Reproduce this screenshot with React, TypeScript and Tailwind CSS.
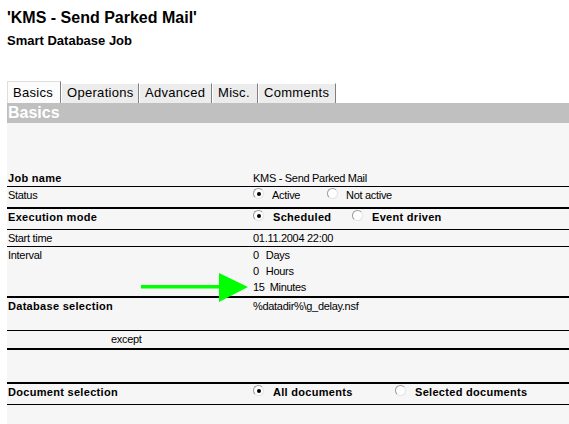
import React from 'react'

const FONT = { fontFamily: '"Liberation Sans", Arial, sans-serif' }

function Radio({ checked }: { checked?: boolean }) {
  return (
    <span className="mt-[1px] inline-flex h-[11px] w-[11px] shrink-0 items-center justify-center rounded-full border border-t-[#9a9a9a] border-l-[#9a9a9a] border-r-[#e4e4e4] border-b-[#e4e4e4] bg-white">
      {checked && <span className="h-[4px] w-[4px] rounded-full bg-black" />}
    </span>
  )
}

function Option({ checked, label, bold, width }: { checked?: boolean; label: string; bold?: boolean; width?: string }) {
  return (
    <div className={`flex items-start ${width ?? ''}`}>
      <Radio checked={checked} />
      <span className={bold ? 'ml-[9px] font-bold tracking-[0.3px]' : 'ml-[8px]'}>{label}</span>
    </div>
  )
}

const TABS = [
  { label: 'Basics', w: 'w-[54px]' },
  { label: 'Operations', w: 'w-[78px]' },
  { label: 'Advanced', w: 'w-[73px]' },
  { label: 'Misc.', w: 'w-[46px]' },
  { label: 'Comments', w: 'w-[78px]' },
]

export default function App() {
  return (
    <div className="relative h-[424px] w-[569px] overflow-hidden bg-white text-black" style={FONT}>
      {/* Title */}
      <div className="pl-[7px] pt-[10px] text-[16px] font-bold leading-[16px]">'KMS - Send Parked Mail'</div>
      <div className="mt-[8px] pl-[7px] text-[13px] font-bold leading-[13px]">Smart Database Job</div>

      {/* Tabs */}
      <div className="mt-[34px] flex h-[22px] items-end pl-[7px] text-[13px] leading-[13px] tracking-[0.3px]">
        {TABS.map((t, i) =>
          i === 0 ? (
            <div key={t.label} className={`${t.w} h-[22px] border-l border-t border-r border-l-[#dedede] border-t-[#dedede] border-r-[#808080] bg-[#fcfcfc] pl-[5px] pt-[4px]`}>
              {t.label}
            </div>
          ) : (
            <div key={t.label} className={`${t.w} h-[20px] border-l border-t border-r border-l-white border-t-white border-r-[#808080] bg-[#ececec] pl-[5px] pt-[2px]`}>
              {t.label}
            </div>
          )
        )}
      </div>

      {/* Content */}
      <div className="ml-[7px] w-[562px] bg-[#f6f6f6] text-[11px] leading-[16px] tracking-[-0.3px]">
        <div className="h-[20px] bg-[#c0c0c0] pl-[1px] text-[16px] font-bold leading-[20px] tracking-normal text-white">Basics</div>
        <div className="h-[47px]" />

        <div className="grid h-[17px] grid-cols-[246px_1fr] border-b border-black">
          <div className="pl-[1px] font-bold tracking-[0.3px]">Job name</div>
          <div>KMS - Send Parked Mail</div>
        </div>
        <div className="grid h-[22px] grid-cols-[246px_1fr] border-b-2 border-black">
          <div className="pl-[1px]">Status</div>
          <div className="flex">
            <Option checked label="Active" width="w-[74px]" />
            <Option label="Not active" />
          </div>
        </div>
        <div className="grid h-[21px] grid-cols-[246px_1fr] border-b border-black">
          <div className="pl-[1px] font-bold tracking-[0.3px]">Execution mode</div>
          <div className="flex">
            <Option checked bold label="Scheduled" width="w-[99px]" />
            <Option bold label="Event driven" />
          </div>
        </div>
        <div className="grid h-[17px] grid-cols-[246px_1fr] border-b border-black">
          <div className="pl-[1px]">Start time</div>
          <div>01.11.2004 22:00</div>
        </div>
        <div className="grid h-[51px] grid-cols-[246px_1fr] border-b-2 border-black">
          <div className="pl-[1px]">Interval</div>
          <div>
            <div>0<span className="ml-[7px]">Days</span></div>
            <div>0<span className="ml-[7px]">Hours</span></div>
            <div>15<span className="ml-[5px]">Minutes</span></div>
          </div>
        </div>
        <div className="grid h-[33px] grid-cols-[246px_1fr] border-b border-black">
          <div className="pl-[1px] font-bold tracking-[0.3px]">Database selection</div>
          <div>%datadir%\g_delay.nsf</div>
        </div>
        <div className="h-[19px] border-b-2 border-black pl-[104px]">except</div>
        <div className="h-[34px] border-b-2 border-black" />
        <div className="grid h-[21px] grid-cols-[246px_1fr] border-b border-black">
          <div className="pl-[1px] font-bold tracking-[0.3px]">Document selection</div>
          <div className="flex">
            <Option checked bold label="All documents" width="w-[142px]" />
            <Option bold label="Selected documents" />
          </div>
        </div>
        <div className="h-[30px]" />
      </div>

      {/* Annotation arrow */}
      <svg className="pointer-events-none absolute left-0 top-0" width="569" height="424" viewBox="0 0 569 424">
        <rect x="141" y="285" width="80" height="3.5" fill="#00ff00" />
        <polygon points="219,273 248,287 219,302" fill="#00ff00" />
      </svg>
    </div>
  )
}
